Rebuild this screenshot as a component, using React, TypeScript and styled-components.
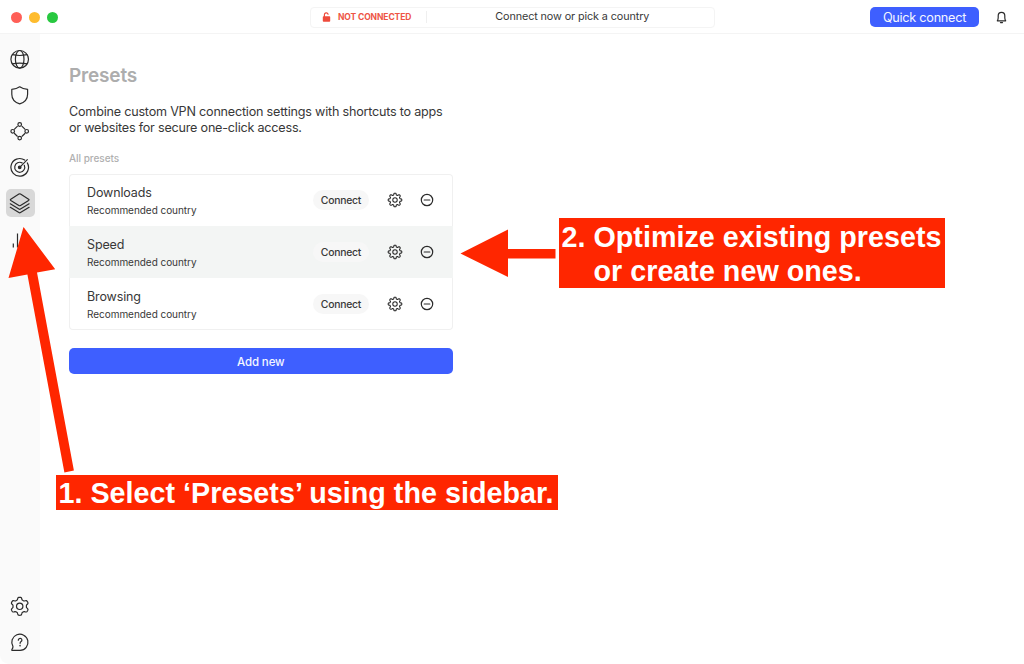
import styled, { createGlobalStyle, css } from 'styled-components';

const GlobalStyle = createGlobalStyle`
  * {
    box-sizing: border-box;
  }

  body {
    margin: 0;
    background: #ffffff;
    color: #383838;
    font-family: Inter, sans-serif;
  }

  button {
    border: 0;
    padding: 0;
    background: none;
    color: inherit;
    font-family: inherit;
  }
`;

const Window = styled.div`
  display: flex;
  flex-direction: column;

  position: relative;

  height: 664px;
  overflow: hidden;
`;

const TitleBar = styled.header`
  display: grid;
  grid-template-columns: 309.5px 405px 1fr;
  align-items: center;

  height: 34px;
  border-bottom: 1px solid #f4f4f4;
`;

const TrafficLights = styled.div`
  display: flex;
  gap: 7px;
  margin-top: 1px;
  padding-left: 11.4px;
`;

const Light = styled.span<{ $color: string }>`
  width: 11px;
  height: 11px;
  border-radius: 50%;
  background: ${({ $color }) => $color};
`;

const StatusBar = styled.div`
  display: flex;
  align-items: center;

  height: 21px;
  margin-top: 1px;
  border: 1px solid #f4f4f4;
  border-radius: 4px;
`;

const Status = styled.div`
  display: flex;
  align-items: center;
  gap: 7px;

  width: 116.5px;
  height: 12px;
  padding-left: 11.5px;
  border-right: 1px solid #efefef;

  color: #ee5445;
  font-size: 8.5px;
  font-weight: 700;
  letter-spacing: -0.11px;
  white-space: nowrap;
`;

const StatusHint = styled.div`
  flex: 1;
  padding-left: 4px;

  font-size: 10.8px;
  line-height: 18px;
  letter-spacing: -0.1px;
  text-align: center;
`;

const TitleActions = styled.div`
  display: flex;
  justify-content: flex-end;
  align-items: center;
  gap: 17px;

  margin-top: 1px;
  padding-right: 17px;
`;

const QuickConnect = styled.button`
  width: 109px;
  height: 20px;
  border-radius: 5px;

  background: #3e5fff;
  color: #f4f6ff;
  font-size: 12.7px;
  line-height: 21px;
  letter-spacing: -0.27px;
`;

const Body = styled.div`
  display: flex;
  flex: 1;
`;

const Sidebar = styled.nav`
  display: flex;
  flex-direction: column;
  align-items: center;
  gap: 8px;

  width: 40px;
  padding: 11px 0 8px;
  border-bottom-left-radius: 9px;
  background: #fafafa;
`;

const SidebarItem = styled.button<{ $active?: boolean; $pushed?: boolean }>`
  display: flex;
  align-items: center;
  justify-content: center;

  width: 29px;
  height: 28px;
  border-radius: 5px;

  ${({ $active }) =>
    $active &&
    css`
      background: #d8d8d8;
    `}
  ${({ $pushed }) =>
    $pushed &&
    css`
      margin-top: auto;
    `}
`;

const Content = styled.main`
  display: flex;
  flex-direction: column;

  width: 383.5px;
  margin-left: 29px;
`;

const Heading = styled.h1`
  margin: 30px 0 0;

  color: #adadad;
  font-size: 19px;
  font-weight: 600;
  line-height: 24px;
  letter-spacing: -0.17px;
`;

const Description = styled.p`
  margin: 16px 0 0;

  font-size: 12.6px;
  line-height: 15.5px;
  letter-spacing: -0.21px;
  white-space: nowrap;
`;

const SectionLabel = styled.h2`
  margin: 16px 0 9px;

  color: #b0b0b0;
  font-size: 10px;
  font-weight: 500;
  line-height: 14px;
  letter-spacing: -0.03px;
`;

const PresetList = styled.ul`
  height: 156px;
  margin: 0;
  padding: 0;
  border-radius: 4px;
  box-shadow: inset 0 0 0 1px #f0f0f0;
  list-style: none;
`;

const PresetRow = styled.li<{ $highlighted?: boolean }>`
  display: flex;
  align-items: center;

  height: 52px;
  padding: 0 17px 0 18px;
  background: ${({ $highlighted }) => ($highlighted ? '#f3f5f4' : 'transparent')};
`;

const PresetText = styled.div`
  flex: 1;
  padding-top: 3px;
`;

const PresetName = styled.h3`
  margin: 0;

  font-size: 12.5px;
  font-weight: 400;
  line-height: 18px;
  letter-spacing: -0.12px;
`;

const PresetCountry = styled.p`
  margin: 0;

  font-size: 10px;
  line-height: 17px;
  letter-spacing: -0.04px;
`;

const ConnectButton = styled.button`
  width: 56px;
  height: 20px;
  margin-right: 17px;
  border-radius: 10px;

  background: #f7f7f7;
  font-size: 10.4px;
  font-weight: 500;
  line-height: 20px;
  letter-spacing: -0.25px;
  padding-top: 1px;
`;

const IconButton = styled.button`
  display: flex;
  align-items: center;
  justify-content: center;

  width: 17px;
  height: 17px;

  & + & {
    margin-left: 15.5px;
  }
`;

const AddButton = styled.button`
  height: 26px;
  margin-top: 18px;
  padding-top: 1px;
  border-radius: 5px;

  background: #3e5fff;
  color: #f4f6ff;
  font-size: 11.5px;
  font-weight: 500;
  line-height: 26px;
  letter-spacing: -0.12px;
`;

const Callout = styled.div<{ $x: number; $y: number; $width: number }>`
  position: absolute;
  left: ${({ $x }) => $x}px;
  top: ${({ $y }) => $y}px;

  width: ${({ $width }) => $width}px;
  padding-left: 3px;
  background: #ff2600;

  color: #ffffff;
  font-family: 'Liberation Sans', sans-serif;
  font-size: 28.7px;
  font-weight: 700;
  line-height: 35px;
  letter-spacing: 0.02px;
  white-space: nowrap;
`;

const CalloutText = styled.span<{ $indent?: number; $drop: number }>`
  display: block;
  height: 35px;
  padding-top: ${({ $drop }) => $drop}px;
  padding-left: ${({ $indent }) => $indent ?? 0}px;
`;

const Arrows = styled.svg`
  position: absolute;
  top: 0;
  left: 0;
  pointer-events: none;
`;

const Icon = styled.svg<{ $stroke?: number }>`
  flex-shrink: 0;
  fill: none;
  stroke: #2b2b2b;
  stroke-width: ${({ $stroke }) => $stroke ?? 1.2};
  stroke-linecap: round;
  stroke-linejoin: round;
`;

// outline of a gear centred on 0,0
function gearPath(teeth: number, inner: number, outer: number) {
  const steps = teeth * 16;
  const points = Array.from({ length: steps }, (_, i) => {
    const angle = (i / steps) * Math.PI * 2;
    const wave = Math.tanh(2.2 * Math.cos(angle * teeth)) / Math.tanh(2.2);
    const r = (inner + outer) / 2 + ((outer - inner) / 2) * wave;
    return `${(r * Math.sin(angle)).toFixed(2)} ${(-r * Math.cos(angle)).toFixed(2)}`;
  });
  return `M${points.join('L')}Z`;
}

function GlobeIcon() {
  return (
    <Icon width="20" height="20" viewBox="-9.7 -10.3 20 20">
      <circle r="8.8" />
      <ellipse rx="4.3" ry="8.8" />
      <path d="M-7.4 -4.6Q0 -3 7.4 -4.6M-7.4 4.6Q0 3 7.4 4.6" />
    </Icon>
  );
}

function ShieldIcon() {
  return (
    <Icon width="20" height="20" viewBox="-9.7 -10.3 20 20">
      <path d="M0 -8.5C2.2 -6.9 4.8 -6.2 7.9 -6V-1C7.9 3.9 4.7 7.2 0 8.6C-4.7 7.2 -7.9 3.9 -7.9 -1V-6C-4.8 -6.2 -2.2 -6.9 0 -8.5Z" />
    </Icon>
  );
}

function NodesIcon() {
  return (
    <Icon width="20" height="20" viewBox="-9.7 -10.3 20 20">
      <circle cy="-6.8" r="1.8" />
      <circle cx="7" r="1.8" />
      <circle cy="6.8" r="1.8" />
      <circle cx="-7" r="1.8" />
      <path d="M-5.2 -2.2L-2.4 -4.9M2.4 -4.9L5.2 -2.2M5.2 2.2L2.4 4.9M-2.4 4.9L-5.2 2.2" />
    </Icon>
  );
}

function TargetIcon() {
  return (
    <Icon width="20" height="20" viewBox="-9.7 -10.3 20 20">
      <path d="M5 -7.2A8.8 8.8 0 1 0 7.6 -4.4" />
      <path d="M2.4 -4.4A5 5 0 1 0 4.6 -2" />
      <path d="M0 0L7.6 -7.6" />
      <circle r="1.3" fill="#2b2b2b" />
    </Icon>
  );
}

function LayersIcon() {
  return (
    <Icon width="22" height="22" viewBox="-10.7 -11.3 22 22">
      <path d="M-0.8 -9.2Q0 -9.7 0.8 -9.2L8.9 -4.1Q9.8 -3.5 8.9 -2.9L0.8 2.2Q0 2.7 -0.8 2.2L-8.9 -2.9Q-9.8 -3.5 -8.9 -4.1Z" />
      <path d="M-9.4 0.5L-0.8 5.8Q0 6.3 0.8 5.8L9.4 0.5" />
      <path d="M-9.4 4L-0.8 9.3Q0 9.8 0.8 9.3L9.4 4" />
    </Icon>
  );
}

function ChartIcon() {
  return (
    <Icon width="20" height="20" viewBox="0 0 20 20">
      <path d="M3.3 14.4V18.4M7.5 4.4V18.4M12 8V18.4M16 13V18.4" strokeLinecap="butt" />
    </Icon>
  );
}

function SettingsIcon() {
  return (
    <Icon width="20" height="20" viewBox="-9.7 -10.3 20 20">
      <path d={gearPath(6, 6.7, 9)} />
      <circle r="3.2" />
    </Icon>
  );
}

function HelpIcon() {
  return (
    <Icon width="20" height="20" viewBox="-9.9 -10.3 20 20">
      <path d="M-6.9 4.3A8.1 8.1 0 1 1 0.2 8.1H-7.7Q-8.6 8.1 -8 7.2Q-7 5.8 -6.9 4.3" />
      <path d="M-1.6 -2.1A1.8 1.7 0 1 1 1.2 -0.8Q0.2 -0.1 0.2 1" />
      <circle cx="0.2" cy="3.3" r="0.3" />
    </Icon>
  );
}

function CogIcon() {
  return (
    <Icon $stroke={1.1} width="16" height="16" viewBox="-8 -8 16 16">
      <path d={gearPath(8, 5.1, 6.8)} />
      <circle r="2.2" />
    </Icon>
  );
}

function RemoveIcon() {
  return (
    <Icon $stroke={1.2} width="16" height="16" viewBox="-8 -8 16 16">
      <circle r="5.7" />
      <path d="M-2.8 0H2.8" />
    </Icon>
  );
}

function BellIcon() {
  return (
    <Icon $stroke={1.2} width="11" height="13" viewBox="0 0 11 13">
      <path d="M1.3 9.8Q2.2 8.6 2.2 6.8V4.8A3.3 3.5 0 0 1 8.8 4.8V6.8Q8.8 8.6 9.7 9.8Z" />
      <path d="M4.5 11.6H6.5" />
    </Icon>
  );
}

function UnlockedIcon() {
  return (
    <svg width="9" height="11" viewBox="0 0 9 11">
      <rect x="0.8" y="4.3" width="7.4" height="5.4" rx="0.8" fill="#ee4b3c" />
      <path
        d="M2.4 4.6V2.9A1.9 1.9 0 0 1 6.1 2.2"
        fill="none"
        stroke="#ee4b3c"
        strokeWidth="1.2"
        strokeLinecap="round"
      />
    </svg>
  );
}

const presets = [
  { name: 'Downloads', country: 'Recommended country' },
  { name: 'Speed', country: 'Recommended country', highlighted: true },
  { name: 'Browsing', country: 'Recommended country' },
];

export default function App() {
  return (
    <Window>
      <GlobalStyle />
      <TitleBar>
        <TrafficLights>
          <Light $color="#ff5f57" />
          <Light $color="#febc2e" />
          <Light $color="#28c840" />
        </TrafficLights>
        <StatusBar>
          <Status>
            <UnlockedIcon />
            NOT CONNECTED
          </Status>
          <StatusHint>Connect now or pick a country</StatusHint>
        </StatusBar>
        <TitleActions>
          <QuickConnect>Quick connect</QuickConnect>
          <BellIcon />
        </TitleActions>
      </TitleBar>

      <Body>
        <Sidebar>
          <SidebarItem aria-label="Locations">
            <GlobeIcon />
          </SidebarItem>
          <SidebarItem aria-label="Threat protection">
            <ShieldIcon />
          </SidebarItem>
          <SidebarItem aria-label="Meshnet">
            <NodesIcon />
          </SidebarItem>
          <SidebarItem aria-label="Monitor">
            <TargetIcon />
          </SidebarItem>
          <SidebarItem aria-label="Presets" $active>
            <LayersIcon />
          </SidebarItem>
          <SidebarItem aria-label="Statistics">
            <ChartIcon />
          </SidebarItem>
          <SidebarItem aria-label="Settings" $pushed>
            <SettingsIcon />
          </SidebarItem>
          <SidebarItem aria-label="Help">
            <HelpIcon />
          </SidebarItem>
        </Sidebar>

        <Content>
          <Heading>Presets</Heading>
          <Description>
            Combine custom VPN connection settings with shortcuts to apps
            <br />
            or websites for secure one-click access.
          </Description>
          <SectionLabel>All presets</SectionLabel>
          <PresetList>
            {presets.map((preset) => (
              <PresetRow key={preset.name} $highlighted={preset.highlighted}>
                <PresetText>
                  <PresetName>{preset.name}</PresetName>
                  <PresetCountry>{preset.country}</PresetCountry>
                </PresetText>
                <ConnectButton>Connect</ConnectButton>
                <IconButton aria-label="Edit">
                  <CogIcon />
                </IconButton>
                <IconButton aria-label="Remove">
                  <RemoveIcon />
                </IconButton>
              </PresetRow>
            ))}
          </PresetList>
          <AddButton>Add new</AddButton>
        </Content>
      </Body>

      <Arrows width="1024" height="664" fill="#ff2600">
        <path d="M23.5 227L55.2 269.2L37 272.6L73.9 470.5L64.4 472.4L27.4 274.4L8.5 278Z" />
        <path d="M460.5 253.5L508 229.5V249H555.5V258.5H508V277Z" />
      </Arrows>
      <Callout $x={55.5} $y={475} $width={502}>
        <CalloutText $drop={1}>1. Select ‘Presets’ using the sidebar.</CalloutText>
      </Callout>
      <Callout $x={558.5} $y={218} $width={386.5}>
        <CalloutText $drop={2}>2. Optimize existing presets</CalloutText>
        <CalloutText $drop={1} $indent={32}>
          or create new ones.
        </CalloutText>
      </Callout>
    </Window>
  );
}
